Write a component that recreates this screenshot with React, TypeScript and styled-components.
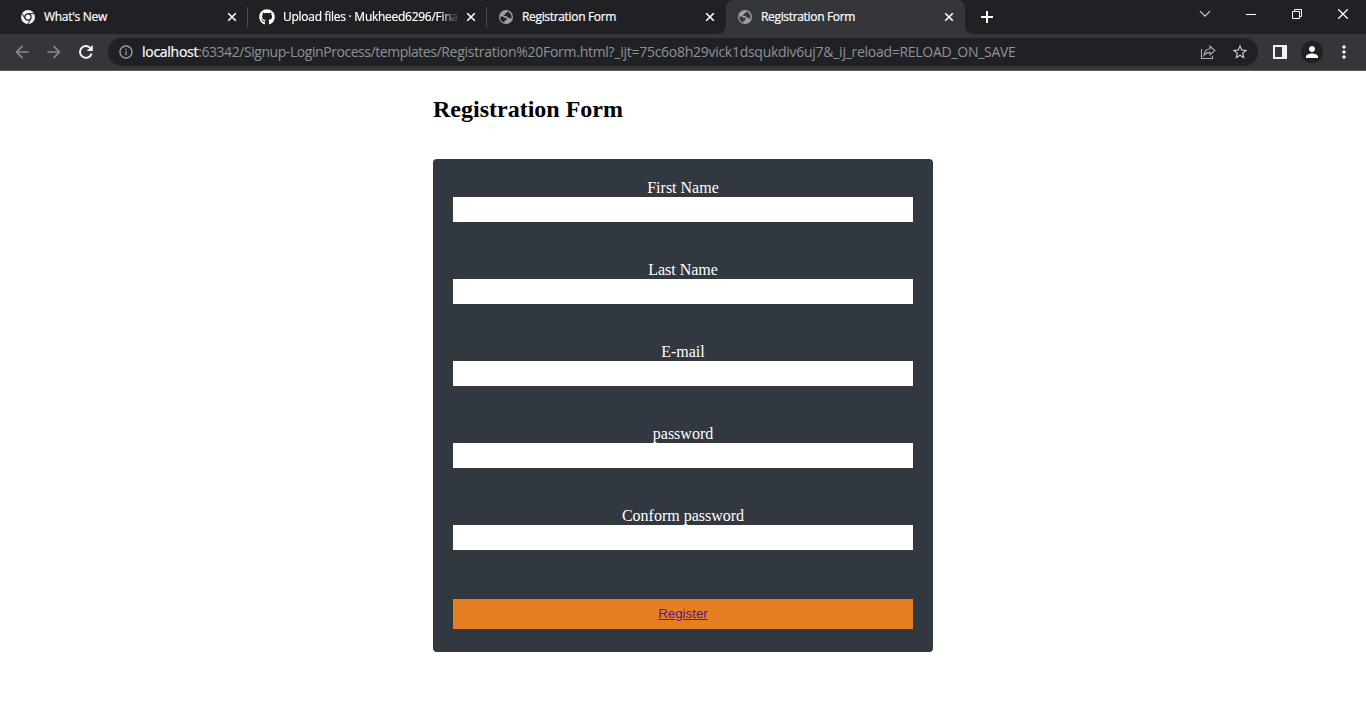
import React from "react";
import styled, { createGlobalStyle } from "styled-components";
import { MdArrowBack, MdArrowForward, MdInfoOutline, MdStarBorder, MdPerson, MdMoreVert } from "react-icons/md";
import { FaGithub } from "react-icons/fa";

const GlobalStyle = createGlobalStyle`
  *, *::before, *::after { box-sizing: border-box; }
  body { margin: 0; background: #fff; overflow: hidden; }
  svg { display: block; flex: none; }
`;

const Browser = styled.div`
  display: flex;
  flex-direction: column;
  height: 728px;
  font-family: "Segoe UI", "Open Sans", "Noto Sans", sans-serif;
`;

const TabStrip = styled.div`
  display: flex;
  height: 34px;
  padding-left: 9px;
  background: #202124;
  color: #fff;
`;

const TabItem = styled.div<{ $active?: boolean; $divider?: boolean }>`
  position: relative;
  display: flex;
  align-items: center;
  width: 239px;
  height: 34px;
  padding: 0 9px 0 12px;
  border-radius: 8px 8px 0 0;
  background: ${(p) => (p.$active ? "#35363a" : "transparent")};

  &::before, &::after {
    content: "";
    display: ${(p) => (p.$active ? "block" : "none")};
    position: absolute;
    bottom: 0;
    width: 8px;
    height: 8px;
  }
  &::before { left: -8px; background: radial-gradient(circle at 0 0, transparent 7.5px, #35363a 8.2px); }
  &::after { right: -8px; background: radial-gradient(circle at 100% 0, transparent 7.5px, #35363a 8.2px); }
  ${(p) =>
    p.$divider &&
    `&::after { display: block; right: 0; bottom: 7px; width: 1px; height: 20px; background: #4b4c50; }`}
`;

const TabIcon = styled.span`
  display: flex;
  justify-content: center;
  width: 14px;
  margin-right: 9px;
  color: #fff;
`;

const TabTitle = styled.span<{ $spacing: number; $fade?: boolean }>`
  flex: 1;
  min-width: 0;
  overflow: hidden;
  white-space: nowrap;
  margin-right: 6px;
  font-size: 12px;
  line-height: 18px;
  letter-spacing: ${(p) => p.$spacing}px;
  -webkit-text-stroke: 0.2px #fff;
  ${(p) => p.$fade && "mask-image: linear-gradient(90deg, #000 156px, transparent 177px);"}
`;

const NewTab = styled.div`
  display: flex;
  align-items: center;
  justify-content: center;
  width: 44px;
`;

const WindowControls = styled.div`
  display: flex;
  height: 28px;
  margin-left: auto;
`;

const Control = styled.div`
  display: flex;
  align-items: center;
  justify-content: center;
  width: 46px;
`;

const Toolbar = styled.div`
  display: flex;
  align-items: center;
  height: 37px;
  padding: 0 6px;
  background: #35363a;
  border-bottom: 1px solid #5d5860;
`;

const ToolButton = styled.div<{ $color?: string }>`
  display: flex;
  align-items: center;
  justify-content: center;
  width: 32px;
  height: 28px;
  color: ${(p) => p.$color ?? "#f1f3f4"};
`;

const Omnibox = styled.div`
  display: flex;
  align-items: center;
  flex: 1;
  height: 28px;
  margin: 0 6px;
  padding: 0 2px 0 10px;
  border-radius: 14px;
  background: #202124;
  color: #9aa0a6;
`;

const Address = styled.div`
  flex: 1;
  margin-left: 8px;
  white-space: nowrap;
  font-size: 14px;
  line-height: 20px;
  letter-spacing: -0.275px;
  color: #8f9296;
`;

const Host = styled.span`
  color: #fff;
  -webkit-text-stroke: 0.2px #fff;
`;

const Path = styled.span`
  letter-spacing: -0.44px;
`;

const Avatar = styled.div`
  display: flex;
  align-items: center;
  justify-content: center;
  width: 22px;
  height: 22px;
  border-radius: 50%;
  background: #202124;
`;

const Page = styled.main`
  width: 500px;
  margin: 0 auto;
  font-family: "Liberation Serif", "Times New Roman", serif;
`;

const Heading = styled.h1`
  margin: 24px 0 36px;
  font-size: 24px;
  line-height: 28px;
  font-weight: 700;
  color: #000;
`;

const Form = styled.form`
  display: flex;
  flex-direction: column;
  height: 493px;
  padding: 20px;
  border-radius: 4px;
  background: #32383f;
`;

const Field = styled.label`
  display: flex;
  flex-direction: column;
  margin-bottom: 39px;
  font-size: 16px;
  line-height: 18px;
  text-align: center;
  color: #fff;
`;

const Input = styled.input`
  width: 100%;
  height: 25px;
  border: 0;
  padding: 0 4px;
  background: #fff;
`;

const Submit = styled.button`
  height: 30px;
  margin-top: 10px;
  padding: 0 0 2px;
  border: 0;
  background: #e67e22;
  font: 13.333px "Liberation Sans", Arial, sans-serif;
`;

const SubmitLink = styled.a`
  color: #551a8b;
  text-decoration: underline;
`;

const ChromeIcon = () => (
  <svg width="14" height="14" viewBox="0 0 14 14" fill="none">
    <circle cx="7" cy="7" r="7" fill="#f1f3f4" />
    <circle cx="7" cy="7" r="3.1" fill="#f1f3f4" stroke="#202124" strokeWidth="1.2" />
    <path d="M7 3.7h6.2M4.1 8.7L1 3.5M9.9 8.7L6.9 13.9" stroke="#202124" strokeWidth="1" />
  </svg>
);

const GlobeIcon = ({ land }: { land: string }) => (
  <svg width="14" height="14" viewBox="0 0 14 14">
    <circle cx="7" cy="7" r="7" fill="#9aa0a6" />
    <path d="M8.2 1.5 7.7 3 6 3.6 5.6 5 4.4 6H7.5L8.5 7.6H10l.8 1h1.5A5.6 5.6 0 0 0 8.2 1.5Z" fill={land} />
    <path d="M1.4 6.5H4l1.2 1.3h1.8l.8 1.2-.9 1.4H5.5v2.2A5.6 5.6 0 0 1 1.4 6.5Z" fill={land} />
  </svg>
);

const CloseIcon = () => (
  <svg width="14" height="14" viewBox="0 0 14 14" stroke="#fff" strokeWidth="1.6">
    <path d="M3.2 3.2l7.6 7.6M10.8 3.2l-7.6 7.6" />
  </svg>
);

const ReloadIcon = () => (
  <svg width="14" height="14" viewBox="0 0 14 14" fill="none">
    <path d="M12.6 8.6A5.9 5.9 0 1 1 11.3 2.9" stroke="currentColor" strokeWidth="2" />
    <path d="M13.8 0v6.1H7.7z" fill="currentColor" />
  </svg>
);

const ShareIcon = () => (
  <svg width="16" height="16" viewBox="0 0 16 16" fill="none" stroke="#a9adb1" strokeWidth="1.15">
    <path d="M1.5 5v9.5h11V11.8" />
    <path d="M10 2.3l4.8 4.2L10 10.7V8.3C7.3 8.3 5.5 9.2 4 11.2 4.4 7.8 6.5 5.2 10 4.8Z" />
  </svg>
);

type Tab = { title: string; icon: React.ReactNode; spacing: number; active?: boolean; divider?: boolean; fade?: boolean };

const tabs: Tab[] = [
  { title: "What's New", icon: <ChromeIcon />, spacing: -0.3, divider: true },
  { title: "Upload files · Mukheed6296/Fina", icon: <FaGithub size={16} />, spacing: -0.27, divider: true, fade: true },
  { title: "Registration Form", icon: <GlobeIcon land="#202124" />, spacing: -0.33 },
  { title: "Registration Form", icon: <GlobeIcon land="#35363a" />, spacing: -0.33, active: true },
];

const fields = [
  { label: "First Name", type: "text" },
  { label: "Last Name", type: "text" },
  { label: "E-mail", type: "email" },
  { label: "password", type: "password" },
  { label: "Conform password", type: "password" },
];

export default function App() {
  return (
    <Browser>
      <GlobalStyle />
      <TabStrip>
        {tabs.map((tab, i) => (
          <TabItem key={i} $active={tab.active} $divider={tab.divider}>
            <TabIcon>{tab.icon}</TabIcon>
            <TabTitle $spacing={tab.spacing} $fade={tab.fade}>{tab.title}</TabTitle>
            <CloseIcon />
          </TabItem>
        ))}
        <NewTab>
          <svg width="12" height="12" viewBox="0 0 12 12" stroke="#fff" strokeWidth="2">
            <path d="M6 0v12M0 6h12" />
          </svg>
        </NewTab>
        <WindowControls>
          <Control>
            <svg width="12" height="8" viewBox="0 0 12 8" fill="none" stroke="#d5d6d7" strokeWidth="1.1">
              <path d="M1 1.2l5 5 5-5" />
            </svg>
          </Control>
          <Control>
            <svg width="10" height="2" viewBox="0 0 10 2"><path d="M0 1h10v1H0z" fill="#fff" /></svg>
          </Control>
          <Control>
            <svg width="10" height="10" viewBox="0 0 10 10" fill="none" stroke="#fff">
              <path d="M.5 2.5h7v7h-7zM2.5 2.5v-2h7v7h-2" />
            </svg>
          </Control>
          <Control>
            <svg width="10" height="10" viewBox="0 0 10 10" stroke="#fff" strokeWidth="1.3">
              <path d="M.2.2l9.6 9.6M9.8.2l-9.6 9.6" />
            </svg>
          </Control>
        </WindowControls>
      </TabStrip>
      <Toolbar>
        <ToolButton $color="#85878a"><MdArrowBack size={20} /></ToolButton>
        <ToolButton $color="#85878a"><MdArrowForward size={20} /></ToolButton>
        <ToolButton><ReloadIcon /></ToolButton>
        <Omnibox>
          <MdInfoOutline size={16} />
          <Address>
            <Host>localhost</Host><Path>:63342/Signup-LoginProcess/templates/</Path>Registration%20Form.html?_ijt=75c6o8h29vick1dsqukdiv6uj7&amp;_ij_reload=RELOAD_ON_SAVE
          </Address>
          <ToolButton><ShareIcon /></ToolButton>
          <ToolButton $color="#c4c7ca"><MdStarBorder size={18} /></ToolButton>
        </Omnibox>
        <ToolButton>
          <svg width="14" height="14" viewBox="0 0 14 14">
            <path d="M0 0h14v14H0zM2 2v10h7V2z" fill="#f1f3f4" fillRule="evenodd" />
          </svg>
        </ToolButton>
        <ToolButton><Avatar><MdPerson size={18} color="#fff" /></Avatar></ToolButton>
        <ToolButton><MdMoreVert size={20} /></ToolButton>
      </Toolbar>
      <Page>
        <Heading>Registration Form</Heading>
        <Form>
          {fields.map((f) => (
            <Field key={f.label}>
              {f.label}
              <Input type={f.type} />
            </Field>
          ))}
          <Submit type="button"><SubmitLink href="#">Register</SubmitLink></Submit>
        </Form>
      </Page>
    </Browser>
  );
}
